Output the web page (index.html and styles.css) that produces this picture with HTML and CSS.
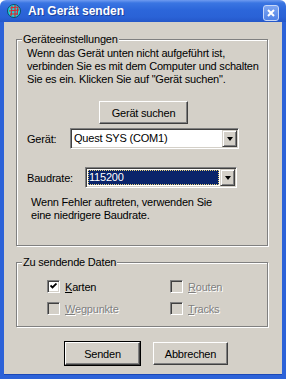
FILE: index.html
```html
<!DOCTYPE html>
<html lang="de">
<head>
	<meta charset="UTF-8">
	<title>An Gerät senden</title>
	<link rel="stylesheet" href="styles.css">
</head>
<body>
	<div class="window">
		<div class="titlebar">
			<svg class="appicon" width="14" height="14" viewBox="0 0 14 14">
				<circle cx="7" cy="7" r="6.5" fill="#1fd3dc" stroke="#0b4a6a" stroke-width="1"/>
				<path d="M3 4 L11 3 M2 7 L12 6 M3 10 L11 10 M5 2 L4 12 M8 1 L8 13 M11 3 L10 11" stroke="#e2202a" stroke-width="1.1" fill="none"/>
			</svg>
			<span class="title">An Gerät senden</span>
			<span class="close">
				<svg width="8" height="8" viewBox="0 0 8 8"><path d="M1 1 L7 7 M7 1 L1 7" stroke="#fff" stroke-width="2"/></svg>
			</span>
		</div>

		<div class="client">
			<div class="group group-device">
				<span class="legend">Geräteeinstellungen</span>
				<p class="hint">Wenn das Gerät unten nicht aufgeführt ist, verbinden Sie es mit dem Computer und schalten Sie es ein. Klicken Sie auf "Gerät suchen".</p>
				<button class="btn btn-search">Gerät suchen</button>

				<div class="row row-device">
					<label class="lbl lbl-device">Gerät:</label>
					<div class="combo combo-device">
						<span class="combo-text">Quest SYS (COM1)</span>
						<span class="drop"><i></i></span>
					</div>
				</div>

				<div class="row row-baud">
					<label class="lbl lbl-baud">Baudrate:</label>
					<div class="combo combo-baud">
						<span class="combo-text selected">115200</span>
						<span class="drop"><i></i></span>
					</div>
				</div>

				<p class="hint hint-baud">Wenn Fehler auftreten, verwenden Sie eine niedrigere Baudrate.</p>
			</div>

			<div class="group group-data">
				<span class="legend">Zu sendende Daten</span>
				<div class="checks">
					<div class="check">
						<span class="box checked">
							<svg width="7" height="7" viewBox="0 0 7 7"><path d="M0.5 2.5 L2.5 4.5 L6.5 0.5" stroke="#000" stroke-width="1.8" fill="none"/></svg>
						</span>
						<span><u>K</u>arten</span>
					</div>
					<div class="check disabled">
						<span class="box"></span>
						<span><u>R</u>outen</span>
					</div>
					<div class="check disabled">
						<span class="box"></span>
						<span><u>W</u>egpunkte</span>
					</div>
					<div class="check disabled">
						<span class="box"></span>
						<span><u>T</u>racks</span>
					</div>
				</div>
			</div>

			<div class="actions">
				<button class="btn btn-default">Senden</button>
				<button class="btn">Abbrechen</button>
			</div>
		</div>
	</div>
</body>
</html>
```

FILE: styles.css
```css
body{margin: 0; background: #fff; font-family: "Liberation Sans", Arial, sans-serif; font-size: 11px; color: #000;}
p{margin: 0;}
.window{width: 286px; height: 379px; display: flex; flex-direction: column;}

.titlebar{height: 22px; flex: none; display: flex; align-items: center; padding: 0 7px; border-radius: 6px 6px 0 0;
	background: linear-gradient(#6f9bf0 0, #3a75e2 3px, #2c66da 10px, #2a62d6 17px, #2457c9 22px);}
.appicon{flex: none;}
.title{margin-left: 7px; flex: 1; color: #fff; font-weight: bold; font-size: 12px; text-shadow: 1px 1px 0 #1a3f9a;}
.close{width: 14px; height: 14px; align-self: flex-start; margin-top: 5px; border: 1px solid #c8d8f8; border-radius: 3px;
	background: linear-gradient(#7fa6f2, #4f82e6); display: flex; align-items: center; justify-content: center;}

.client{flex: 1; background: #d4d0c8; border: 4px solid #2c62d8; border-top: none; padding: 17px 0 0 12px; letter-spacing: -0.2px;
	box-shadow: inset 0 -1px 0 #1a48b8;}

.group{position: relative; width: 252px; box-sizing: border-box; border: 1px solid #808080; box-shadow: inset 1px 1px 0 #fff, 1px 1px 0 #fff;}
.legend{position: absolute; left: 5px; top: -7px; padding: 0 1px; line-height: 13px; background: #d4d0c8;}
.group-device{height: 207px; padding: 7px 0 0 10px;}
.hint{line-height: 13px; width: 240px;}
.hint-baud{margin: 8px 0 0 4px; width: 195px;}

.btn{font: inherit; letter-spacing: -0.2px; color: #000; height: 23px; width: 75px; padding: 0; background: #d4d0c8;
	border: 1px solid; border-color: #fff #404040 #404040 #fff; box-shadow: inset -1px -1px 0 #808080;}
.btn-search{display: block; width: 89px; margin: 15px 0 0 72px;}
.btn-default{outline: 1px solid #000;}

.row{display: flex; align-items: center;}
.row-device{margin-top: 4px;}
.row-baud{margin-top: 18px;}
.lbl-device{width: 43px;}
.lbl-baud{width: 58px;}

.combo{height: 21px; box-sizing: border-box; display: flex; align-items: stretch; background: #fff; padding: 1px;
	border: 1px solid; border-color: #808080 #fff #fff #808080; box-shadow: inset 1px 1px 0 #404040, inset -1px -1px 0 #d4d0c8;}
.combo-device{width: 169px;}
.combo-baud{width: 152px;}
.combo-text{flex: 1; margin: 1px; padding-left: 1px; line-height: 15px;}
.combo-text.selected{background: #0a246a; color: #fff; outline: 1px dotted #e8d27a; outline-offset: -1px;}
.drop{width: 15px; box-sizing: border-box; background: #d4d0c8; display: flex; align-items: center; justify-content: center;
	border: 1px solid; border-color: #d4d0c8 #404040 #404040 #d4d0c8; box-shadow: inset 1px 1px 0 #fff, inset -1px -1px 0 #808080;}
.drop i{width: 0; height: 0; border-left: 3.5px solid transparent; border-right: 3.5px solid transparent; border-top: 4px solid #000;}

.group-data{margin-top: 16px; height: 65px; padding: 17px 0 0 30px;}
.checks{display: grid; grid-template-columns: 123px auto; row-gap: 9px;}
.check{display: flex; align-items: center; gap: 5px; height: 13px;}
.box{width: 13px; height: 13px; box-sizing: border-box; background: #fff; display: flex; align-items: center; justify-content: center;
	border: 1px solid; border-color: #808080 #fff #fff #808080; box-shadow: inset 1px 1px 0 #404040, inset -1px -1px 0 #d4d0c8;}
.disabled .box{background: #d4d0c8;}
.disabled{color: #808080; text-shadow: 1px 1px 0 #fff;}

.actions{display: flex; gap: 13px; margin: 15px 0 0 49px;}
```
